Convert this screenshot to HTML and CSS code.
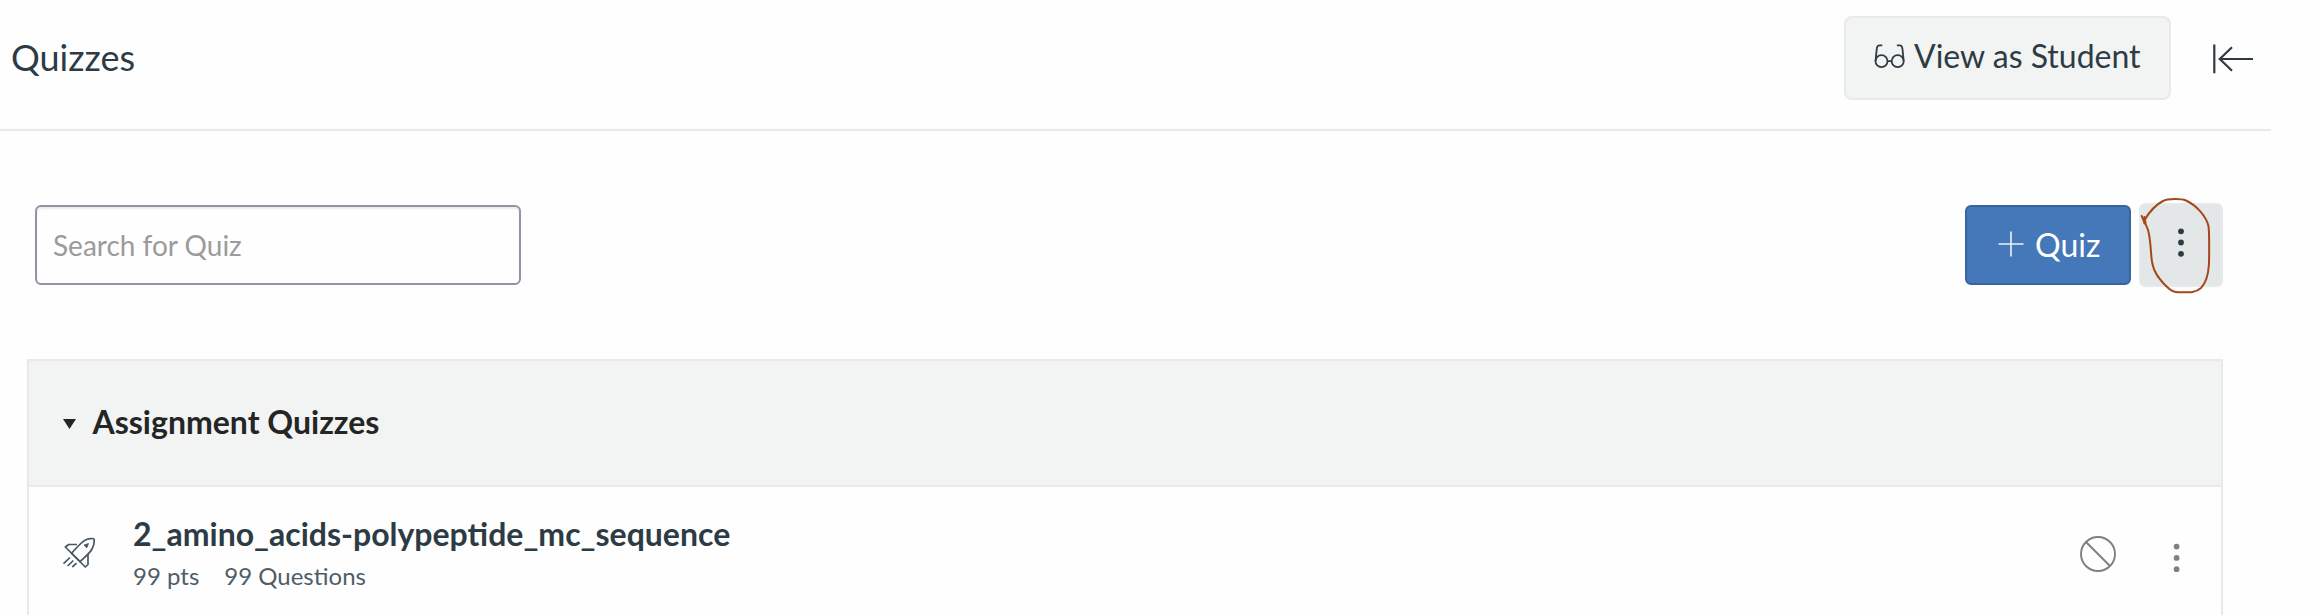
FILE: index.html
```html
<!DOCTYPE html>
<html lang="en">
<head>
<meta charset="utf-8">
<title>Quizzes</title>
<link rel="stylesheet" href="styles.css">
</head>
<body>
<div class="page">
<header class="topbar">
  <h1 class="page-title">Quizzes</h1>
  <button class="student-view">
    <svg class="glasses" width="31" height="25" viewBox="0 0 31 25" fill="none" stroke="currentColor" stroke-width="1.8">
      <circle cx="7.500" cy="17.200" r="6"/><circle cx="23.700" cy="17.200" r="6"/>
      <path d="M13.500 17.200h4.200M1.500 17 2.800 4.500C3.100 2.300 4 1.400 5.500 1.400H8.300M29.700 17 28.400 4.500C28.100 2.300 27.200 1.400 25.700 1.400H22.900"/>
    </svg>
    <span>View as Student</span>
  </button>
  <svg class="collapse" width="42" height="32" viewBox="0 0 42 32" fill="none" stroke="currentColor" stroke-width="2.2">
    <path d="M2.300 1.600V30.200M7.500 16H41M20 4.300 7.800 16 20 27.700"/>
  </svg>
</header>
<main class="content">
  <div class="toolbar">
    <input class="search" type="text" placeholder="Search for Quiz">
    <button class="add-quiz">
      <svg class="plus" width="26" height="26" viewBox="0 0 26 26" stroke="currentColor" stroke-width="1.600"><path d="M.5 13h25M13 .5v25"/></svg>
      <span>Quiz</span>
    </button>
    <div class="menu">
      <button class="menu-button" aria-label="More options">
        <svg class="menu-dots" width="8" height="30" viewBox="0 0 8 30" fill="currentColor"><circle cx="4" cy="3.300" r="2.900"/><circle cx="4" cy="14.500" r="2.900"/><circle cx="4" cy="25.800" r="2.900"/></svg>
      </button>
      <svg class="scribble" width="80" height="106" viewBox="0 0 80 106" fill="none" stroke="#a5471b" stroke-width="2" stroke-linecap="round" stroke-linejoin="round">
        <path d="M1.700 17C3 20 4 22 4.500 24.500M4.500 18 5.500 24"/>
        <path d="M4 22C8 15 15 6 23 2 28-.5 41-.5 46 1.500 56 6 66 17 68.500 27 69.500 35 69.300 48 69 65 68.500 73 66 84 61 89 56 93.500 51 93.500 38 93.300 33 93 30 91 24 85 18 78 14 73 12.500 65 10.500 58 11.300 42 8 31 7 28 5.500 25 4.500 22.500"/>
      </svg>
    </div>
  </div>
  <section class="group">
    <div class="group-header">
      <svg class="caret" width="13" height="10" viewBox="0 0 13 10" fill="currentColor"><path d="M0 0h13L6.500 10z"/></svg>
      <h2 class="group-title">Assignment Quizzes</h2>
    </div>
    <div class="quiz">
      <svg class="rocket" width="34" height="34" viewBox="0 0 34 34" fill="none" stroke="currentColor" stroke-width="1.700" stroke-linejoin="round">
        <path d="M9.500 16.200C14 11.500 19.500 4.500 24.500 2.500 27.500 1.400 31.500 1.200 32 2 32.500 4.500 32 8 30 12 28 16 23 20 18 24.700z"/>
        <path d="M15 7.500H6.700L3.300 10 23.300 30 26 27.500V17"/>
        <path d="M26.500 6.500 22 8 24.800 10.900z" fill="currentColor" stroke-width=".8"/>
        <path d="M8 20.500 1.500 26.700M11.300 23.500 5.700 29M14.600 26.200 10.300 30"/>
      </svg>
      <div class="quiz-text">
        <a class="quiz-title">2_amino_acids-polypeptide_mc_sequence</a>
        <div class="quiz-meta"><span>99 pts</span><span>99 Questions</span></div>
      </div>
      <svg class="unpublished" width="36" height="36" viewBox="0 0 36 36" fill="none" stroke="currentColor" stroke-width="1.900"><circle cx="18" cy="18" r="17"/><path d="M6 6 30 30"/></svg>
      <svg class="row-dots" width="8" height="30" viewBox="0 0 8 30" fill="currentColor"><circle cx="3.600" cy="3.600" r="2.900"/><circle cx="3.600" cy="14.900" r="2.900"/><circle cx="3.600" cy="26.200" r="2.900"/></svg>
    </div>
  </section>
</main>
</div>
</body>
</html>
```
FILE: styles.css
```css
* { box-sizing: border-box; }
body { margin: 0; background: #fefefe; }
.page { width: 2318px; height: 615px; overflow: hidden; color: #2d3b45; font-family: Lato, "Open Sans", sans-serif; }
button { font: inherit; color: inherit; }
svg { display: block; flex: none; }
h1, h2 { margin: 0; }

.topbar { display: flex; align-items: center; width: 2271px; height: 131px; padding: 0 17px 15px 11px; border-bottom: 2px solid #e8eaea; }
.page-title { margin-right: auto; font-size: 36px; font-weight: 400; line-height: 44px; }
.student-view { display: flex; align-items: center; gap: 9px; width: 327px; height: 84px; margin: 2px 41px 0 0; padding: 0 0 5px 28px; border: 2px solid #e8eaea; border-radius: 8px; background: #f2f4f4; font-size: 32px; white-space: nowrap; }
.glasses { margin-top: 1px; }
.collapse { margin-top: 4px; }

.content { padding: 72px 95px 0 27px; }
.toolbar { display: flex; align-items: center; height: 84px; padding-left: 8px; }
.search { width: 486px; height: 80px; margin-right: auto; padding: 0 16px; border: 2px solid #9095a3; border-radius: 6px; background: #fefefe; box-shadow: inset 0 2px 2px rgba(0, 0, 0, .07); font: 28px Lato, "Open Sans", sans-serif; }
.search::placeholder { color: #9b9b9b; opacity: 1; }
.add-quiz { display: flex; align-items: center; gap: 11px; width: 166px; height: 80px; margin-right: 8px; padding: 0 0 2px 31px; border: 2px solid #37659d; border-radius: 6px; background: #4478b8; color: #fff; font-size: 32px; }
.plus { opacity: .9; }
.menu { position: relative; }
.menu-button { display: flex; justify-content: center; width: 84px; height: 84px; padding: 23px 1px 0 0; border: 2px solid #e7eaea; border-radius: 6px; background: #e3e7e8; }
.scribble { position: absolute; left: 1px; top: -4px; overflow: visible; }

.group { height: 256px; margin-top: 72px; border: 2px solid #e8eaea; border-bottom: 0; }
.group-header { display: flex; align-items: center; gap: 17px; height: 126px; padding: 0 0 2px 33.5px; border-bottom: 2px solid #e8eaea; background: #f2f4f4; color: #252525; }
.caret { margin-top: 3px; }
.group-title { font-size: 32px; font-weight: 700; line-height: 40px; }
.quiz { display: flex; align-items: flex-start; padding: 0 40px 0 33px; }
.rocket { margin-top: 50px; color: #4a5862; }
.quiz-text { display: flex; flex-direction: column; margin: 28px auto 0 37px; }
.quiz-title { font-size: 32px; font-weight: 700; line-height: 38px; }
.quiz-meta { display: flex; gap: 25px; margin-top: 8px; color: #505d67; font-size: 24px; line-height: 30px; }
.unpublished { margin: 49px 57px 0 0; color: #808080; }
.row-dots { margin-top: 56px; color: #808080; }
```
